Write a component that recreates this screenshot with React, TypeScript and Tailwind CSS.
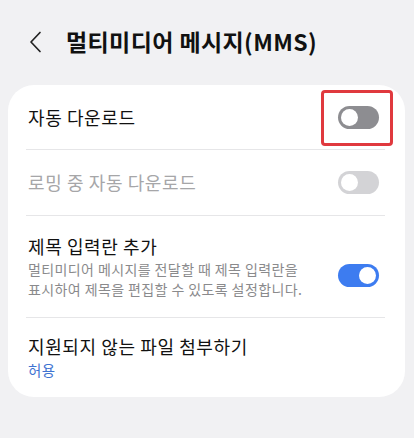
import React from 'react'

const FONT = { fontFamily: '"Noto Sans CJK KR", "Noto Sans", sans-serif' }

function Toggle({ on, disabled }: { on: boolean; disabled?: boolean }) {
  if (on) {
    return (
      <div className="flex h-[23px] w-[41px] items-center justify-end rounded-full bg-[#3d7cf0] pr-[3px]">
        <div className="h-[17px] w-[17px] rounded-full bg-white" />
      </div>
    )
  }
  return (
    <div
      className={`flex h-[23px] w-[41px] items-center rounded-full pl-[3px] ${
        disabled ? 'bg-[#d3d3d6]' : 'bg-[#8d8d91]'
      }`}
    >
      <div className="h-[17px] w-[17px] rounded-full bg-white" />
    </div>
  )
}

export default function App() {
  return (
    <div className="h-[438px] w-[414px] bg-[#f1f1f3] text-[#111]" style={FONT}>
      {/* Header */}
      <div className="flex h-[85px] items-center pb-[2px]">
        <svg width="20" height="24" viewBox="0 0 20 24" className="ml-[27px]" fill="none">
          <path d="M13 2.5 L4 12 L13 21.5" stroke="#222" strokeWidth="1.7" strokeLinecap="round" strokeLinejoin="round" />
        </svg>
        <h1 className="ml-[19px] text-[23px] font-bold tracking-[0.4px]">멀티미디어 메시지(MMS)</h1>
      </div>

      {/* Card */}
      <div className="mx-[8px] w-[397px] rounded-[26px] bg-white">
        <div className="flex h-[64px] items-center justify-between pl-[20px] pr-[26px]">
          <span className="text-[18px] tracking-[0.6px]">자동 다운로드</span>
          <div className="relative">
            <Toggle on={false} />
            <div className="absolute -bottom-[17px] -left-[17px] -right-[14px] -top-[16px] rounded-[4px] border-[3px] border-[#e0393e]" />
          </div>
        </div>
        <div className="ml-[18px] mr-[20px] h-px bg-[#e6e6e8]" />
        <div className="flex h-[65px] items-center justify-between pl-[20px] pr-[26px]">
          <span className="text-[18px] tracking-[0.6px] text-[#a6a6a8]">로밍 중 자동 다운로드</span>
          <Toggle on={false} disabled />
        </div>
        <div className="ml-[18px] mr-[20px] h-px bg-[#e6e6e8]" />
        <div className="flex h-[101px] items-center justify-between pl-[20px] pr-[26px]">
          <div className="flex flex-col">
            <span className="text-[18px] leading-[24px] tracking-[0.6px]">제목 입력란 추가</span>
            <span className="mt-[1px] text-[14px] leading-[20px] tracking-[0.4px] text-[#8a8a8c]">
              멀티미디어 메시지를 전달할 때 제목 입력란을
              <br />
              표시하여 제목을 편집할 수 있도록 설정합니다.
            </span>
          </div>
          <div className="mt-[18px]">
            <Toggle on />
          </div>
        </div>
        <div className="ml-[18px] mr-[20px] h-px bg-[#e6e6e8]" />
        <div className="flex h-[79px] flex-col pl-[20px] pt-[16px]">
          <span className="text-[18px] leading-[24px] tracking-[0.6px]">지원되지 않는 파일 첨부하기</span>
          <span className="mt-[2px] text-[14.5px] leading-[20px] tracking-[0.3px] text-[#3f73d1]">허용</span>
        </div>
      </div>
    </div>
  )
}
